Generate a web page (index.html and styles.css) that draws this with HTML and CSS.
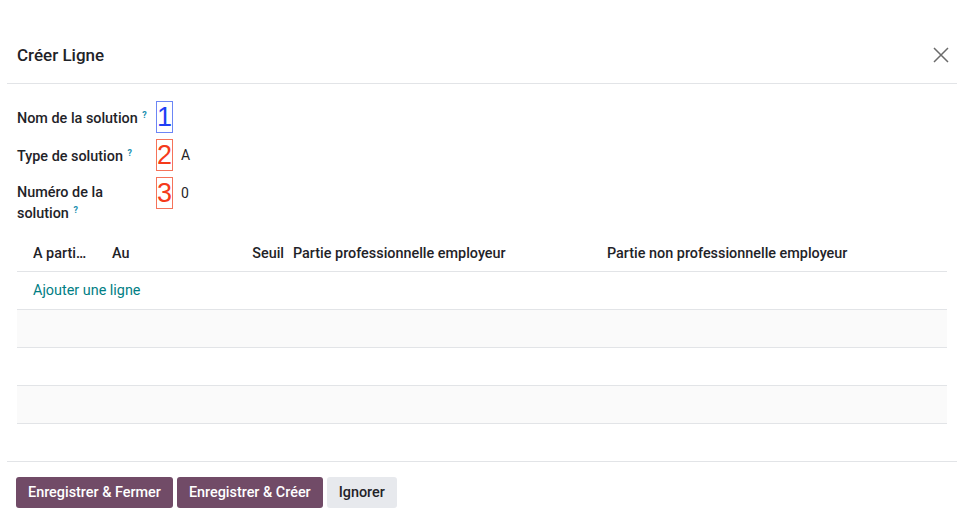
FILE: index.html
```html
<!DOCTYPE html>
<html lang="fr">
<head>
    <meta charset="UTF-8">
    <title>Créer Ligne</title>
    <link rel="stylesheet" href="styles.css">
</head>
<body>
    <div class="modal">
        <div class="modal-header">
            <h4 class="modal-title">Créer Ligne</h4>
            <button class="btn-close" aria-label="Fermer">
                <svg width="16" height="16" viewBox="0 0 16 16">
                    <path d="M1 1 L15 15 M15 1 L1 15" stroke="#6b6b6b" stroke-width="1.5" fill="none"/>
                </svg>
            </button>
        </div>

        <div class="modal-body">
            <div class="form-grid">
                <div class="field-label">Nom de la solution <sup>?</sup></div>
                <div class="field-value">
                    <span class="mark mark-blue">1</span>
                </div>

                <div class="field-label">Type de solution <sup>?</sup></div>
                <div class="field-value">
                    <span class="mark mark-red">2</span>
                    <span class="value">A</span>
                </div>

                <div class="field-label label-wrap">Numéro de la<br>solution <sup>?</sup></div>
                <div class="field-value">
                    <span class="mark mark-red">3</span>
                    <span class="value">0</span>
                </div>
            </div>

            <table class="lines">
                <colgroup>
                    <col style="width: 87px">
                    <col style="width: 141px">
                    <col style="width: 44px">
                    <col style="width: 314px">
                    <col style="width: 344px">
                </colgroup>
                <thead>
                    <tr>
                        <th class="first"><span class="truncate">A partir du</span></th>
                        <th class="second">Au</th>
                        <th class="num">Seuil</th>
                        <th>Partie professionnelle employeur</th>
                        <th>Partie non professionnelle employeur</th>
                    </tr>
                </thead>
                <tbody>
                    <tr>
                        <td colspan="5" class="add-line"><a href="#">Ajouter une ligne</a></td>
                    </tr>
                    <tr class="striped"><td colspan="5"></td></tr>
                    <tr><td colspan="5"></td></tr>
                    <tr class="striped"><td colspan="5"></td></tr>
                </tbody>
            </table>
        </div>

        <div class="modal-footer">
            <button class="btn btn-primary">Enregistrer &amp; Fermer</button>
            <button class="btn btn-primary">Enregistrer &amp; Créer</button>
            <button class="btn btn-secondary">Ignorer</button>
        </div>
    </div>
</body>
</html>
```

FILE: styles.css
```css
body {
    margin: 0;
    background: #fff;
    font-family: Roboto, "Liberation Sans", sans-serif;
    font-size: 14.4px;
    color: #1f2328;
}

.modal {
    padding: 0 4px 0 7px;
}

/* Header */
.modal-header {
    display: flex;
    align-items: center;
    justify-content: space-between;
    height: 84px;
    padding: 27px 8px 0 10px;
    border-bottom: 1px solid #e2e4e7;
    box-sizing: border-box;
}

.modal-title {
    margin: 0;
    font-size: 17px;
    font-weight: 500;
}

.btn-close {
    background: none;
    border: none;
    padding: 0;
    width: 16px;
    height: 16px;
    cursor: pointer;
}

/* Body */
.modal-body {
    padding: 17px 10px 37px 10px;
}

.form-grid {
    display: grid;
    grid-template-columns: 139px 1fr;
    row-gap: 6px;
    margin-bottom: 11px;
}

.field-label {
    font-weight: 500;
    line-height: 21px;
    padding-top: 7px;
}

.field-label.label-wrap {
    padding-top: 5px;
}

.field-label sup {
    color: #1b8fb0;
    font-size: 9px;
    font-weight: 700;
    vertical-align: top;
    position: relative;
    top: -3px;
    margin-left: 1px;
}

.field-value {
    display: flex;
    align-items: center;
    align-self: start;
    height: 32px;
}

.mark {
    display: inline-block;
    width: 15px;
    height: 30px;
    padding: 0;
    font-family: "Liberation Sans", Arial, sans-serif;
    font-size: 27px;
    line-height: 30px;
    text-align: center;
}

.mark-blue {
    color: #1f3ff5;
    border: 1px solid #6c86f5;
}

.mark-red {
    color: #f53a1a;
    border: 1px solid #f5735a;
}

.value {
    margin-left: 8px;
    font-size: 14px;
}

/* Lines table */
.lines {
    width: 930px;
    border-collapse: collapse;
    table-layout: fixed;
}

.lines th {
    height: 36px;
    padding: 0 4px;
    text-align: left;
    font-weight: 500;
    white-space: nowrap;
    border-bottom: 1px solid #e2e4e7;
}

.lines th.first {
    padding-left: 16px;
    padding-right: 15px;
}

.lines th.second {
    padding-left: 8px;
}

.lines th.num {
    text-align: right;
    padding-right: 5px;
}

.truncate {
    display: block;
    overflow: hidden;
    text-overflow: ellipsis;
    white-space: nowrap;
}

.lines td {
    height: 37px;
    padding: 0;
    border-bottom: 1px solid #e2e4e7;
}

.lines tr.striped td {
    background: #fafafa;
}

.add-line {
    padding-left: 16px !important;
}

.add-line a {
    color: #017e84;
    text-decoration: none;
}

/* Footer */
.modal-footer {
    border-top: 1px solid #e2e4e7;
    padding: 15px 9px 0 9px;
    display: flex;
    gap: 4px;
}

.btn {
    height: 31px;
    padding: 0 12px;
    border: none;
    border-radius: 3px;
    font-family: Roboto, "Liberation Sans", sans-serif;
    font-size: 14.4px;
    font-weight: 500;
    cursor: pointer;
}

.btn-primary {
    background: #714b67;
    color: #fff;
}

.btn-secondary {
    background: #e7e9ed;
    color: #1f2328;
}
```
